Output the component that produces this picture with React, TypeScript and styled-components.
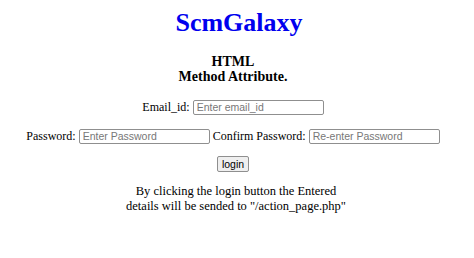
import styled, { createGlobalStyle } from 'styled-components';

const GlobalStyle = createGlobalStyle`
  body {
    margin: 0;
    background: #ffffff;
    font-family: "Liberation Serif", "Times New Roman", serif;
    color: #000000;
  }
`;

const Page = styled.div`
  display: flex;
  flex-direction: column;
  align-items: center;
  padding-top: 8px;
  text-align: center;
`;

const Title = styled.h1`
  margin: 0;
  padding-left: 4px;
  font-size: 26px;
  font-weight: bold;
  color: #0000ee;
  line-height: 30px;
`;

const SubTitle = styled.h4`
  margin: 16px 0 0;
  padding-right: 8px;
  font-size: 14px;
  font-weight: bold;
  line-height: 15px;
`;

const Form = styled.form`
  display: flex;
  flex-direction: column;
  align-items: center;
  margin-top: 14px;
  padding-right: 8px;
  font-size: 12px;
`;

const Row = styled.div<{ $gap: number }>`
  display: flex;
  align-items: center;
  gap: 3px;
  height: 18px;
  margin-bottom: ${(p) => p.$gap}px;
`;

const Label = styled.label`
  white-space: nowrap;
`;

const Input = styled.input`
  box-sizing: border-box;
  width: 131px;
  height: 15px;
  padding: 0 3px;
  border: 1px solid #8f8f8f;
  border-radius: 2px;
  font-family: "Liberation Sans", Arial, sans-serif;
  font-size: 10.5px;
  &::placeholder {
    color: #777777;
  }
`;

const Button = styled.button`
  box-sizing: border-box;
  height: 16px;
  padding: 0 4px;
  border: 1px solid #8f8f8f;
  border-radius: 2px;
  background: #efefef;
  font-family: "Liberation Sans", Arial, sans-serif;
  font-size: 10.5px;
  color: #000;
`;

const Note = styled.p`
  margin: 11px 0 0;
  padding-right: 2px;
  font-size: 12.5px;
  line-height: 15px;
`;

export default function App() {
  return (
    <>
      <GlobalStyle />
      <Page>
        <Title>ScmGalaxy</Title>
        <SubTitle>
          HTML
          <br />
          Method Attribute.
        </SubTitle>
        <Form action="/action_page.php" onSubmit={(e) => e.preventDefault()}>
          <Row $gap={11}>
            <Label>Email_id:</Label>
            <Input type="text" placeholder="Enter email_id" />
          </Row>
          <Row $gap={10}>
            <Label>Password:</Label>
            <Input type="password" placeholder="Enter Password" />
            <Label>Confirm Password:</Label>
            <Input type="password" placeholder="Re-enter Password" />
          </Row>
          <Row $gap={0}>
            <Button type="submit">login</Button>
          </Row>
        </Form>
        <Note>
          By clicking the login button the Entered
          <br />
          details will be sended to "/action_page.php"
        </Note>
      </Page>
    </>
  );
}
